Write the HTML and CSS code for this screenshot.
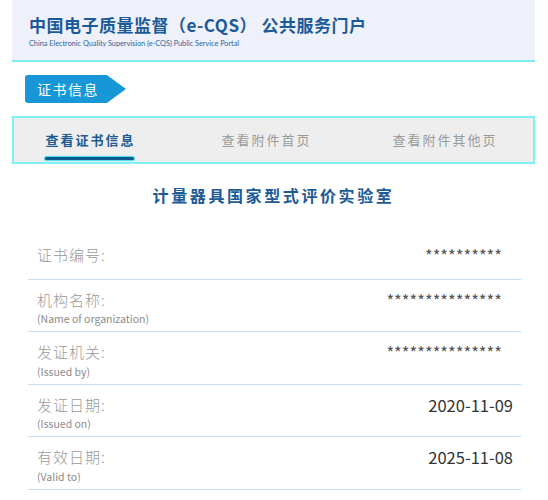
FILE: index.html
```html
<!DOCTYPE html>
<html lang="zh-CN">
<head>
<meta charset="utf-8">
<title>证书信息</title>
<link rel="stylesheet" href="styles.css">
</head>
<body>
<div class="page">
  <header class="header">
    <div class="title">中国电子质量监督（e-CQS） 公共服务门户</div>
    <div class="subtitle">China Electronic Quality Supervision (e-CQS) Public Service Portal</div>
  </header>

  <div class="badge-row">
    <div class="badge">证书信息</div>
  </div>

  <nav class="tabs">
    <div class="tab tab-first active"><span class="tab-text">查看证书信息</span><span class="tab-line"></span></div>
    <div class="tab tab-second"><span class="tab-text">查看附件首页</span></div>
    <div class="tab tab-third"><span class="tab-text">查看附件其他页</span></div>
  </nav>

  <h1 class="org">计量器具国家型式评价实验室</h1>

  <div class="rows">
    <div class="row">
      <div class="row-main"><span class="label">证书编号:</span><span class="value mask">**********</span></div>
    </div>
    <div class="row">
      <div class="row-main"><span class="label">机构名称:</span><span class="value mask">***************</span></div>
      <div class="sub">(Name of organization)</div>
    </div>
    <div class="row">
      <div class="row-main"><span class="label">发证机关:</span><span class="value mask">***************</span></div>
      <div class="sub">(Issued by)</div>
    </div>
    <div class="row">
      <div class="row-main"><span class="label">发证日期:</span><span class="value date">2020-11-09</span></div>
      <div class="sub">(Issued on)</div>
    </div>
    <div class="row">
      <div class="row-main"><span class="label">有效日期:</span><span class="value date">2025-11-08</span></div>
      <div class="sub">(Valid to)</div>
    </div>
  </div>
</div>
</body>
</html>
```

FILE: styles.css
```css
html, body {
  margin: 0;
  padding: 0;
  background: #ffffff;
}

body {
  font-family: "Noto Sans CJK SC", "Noto Sans", sans-serif;
}

.page {
  margin: 0 13px 0 12px;
}

.header {
  box-sizing: border-box;
  height: 62px;
  padding: 14px 0 0 17px;
  background: #eef1f9;
  border-bottom: 2px solid #7eeef5;
}

.title {
  font-size: 17px;
  line-height: 22px;
  font-weight: 700;
  letter-spacing: 0.5px;
  color: #1b5a98;
  white-space: nowrap;
}

.subtitle {
  margin-top: 3px;
  font-family: "Lato", "Open Sans", sans-serif;
  font-size: 7.3px;
  line-height: 10px;
  color: #2b65a0;
  white-space: nowrap;
}

.badge-row {
  padding: 13px 0 13px 13px;
}

.badge {
  width: 101px;
  height: 28px;
  box-sizing: border-box;
  padding-left: 12px;
  background: #1797d8;
  color: #ffffff;
  font-size: 14px;
  line-height: 28px;
  letter-spacing: 1.5px;
  border-radius: 3px 0 0 3px;
  clip-path: polygon(0 0, 81% 0, 100% 50%, 81% 100%, 0 100%);
}

.tabs {
  display: grid;
  grid-template-columns: 151px 201px 156px;
  height: 48px;
  box-sizing: border-box;
  background: #eeeeee;
  border: 2px solid #7ef0f6;
}

.tab {
  display: flex;
  flex-direction: column;
  align-items: center;
  padding-top: 12px;
}

.tab-text {
  font-size: 13px;
  line-height: 20px;
  letter-spacing: 2px;
  color: #9a9a9a;
  padding-left: 2px;
  white-space: nowrap;
}

.tab.active .tab-text {
  color: #1d5b92;
  font-weight: 700;
}

.tab-line {
  display: block;
  width: 89px;
  height: 3px;
  margin-top: 7px;
  border-radius: 2px;
  background: #0b5a8e;
  box-shadow: 0 0 1px 1px #45dcef;
}

.org {
  margin: 0;
  padding: 20px 0 0;
  height: 63px;
  box-sizing: border-box;
  text-align: center;
  font-size: 16px;
  line-height: 22px;
  font-weight: 700;
  letter-spacing: 2.6px;
  color: #1d5b94;
}

.rows {
  margin: 0 14px 0 16px;
}

.row {
  height: 52.5px;
  box-sizing: border-box;
  padding: 5px 8px 0 9px;
  border-bottom: 1px solid #c6ddf0;
  display: flex;
  flex-direction: column;
  justify-content: center;
}

.row-main {
  display: flex;
  justify-content: space-between;
  align-items: center;
  height: 18px;
}

.label {
  font-size: 15px;
  line-height: 18px;
  letter-spacing: 1px;
  font-weight: 300;
  color: #999999;
}

.sub {
  margin-top: 3.5px;
  font-size: 10.5px;
  line-height: 13px;
  color: #8c8c8c;
}

.value {
  white-space: nowrap;
}

.mask {
  font-size: 16.5px;
  line-height: 18px;
  color: #555555;
  margin-right: 11px;
}

.date {
  font-size: 16.5px;
  line-height: 18px;
  color: #333333;
}
```
